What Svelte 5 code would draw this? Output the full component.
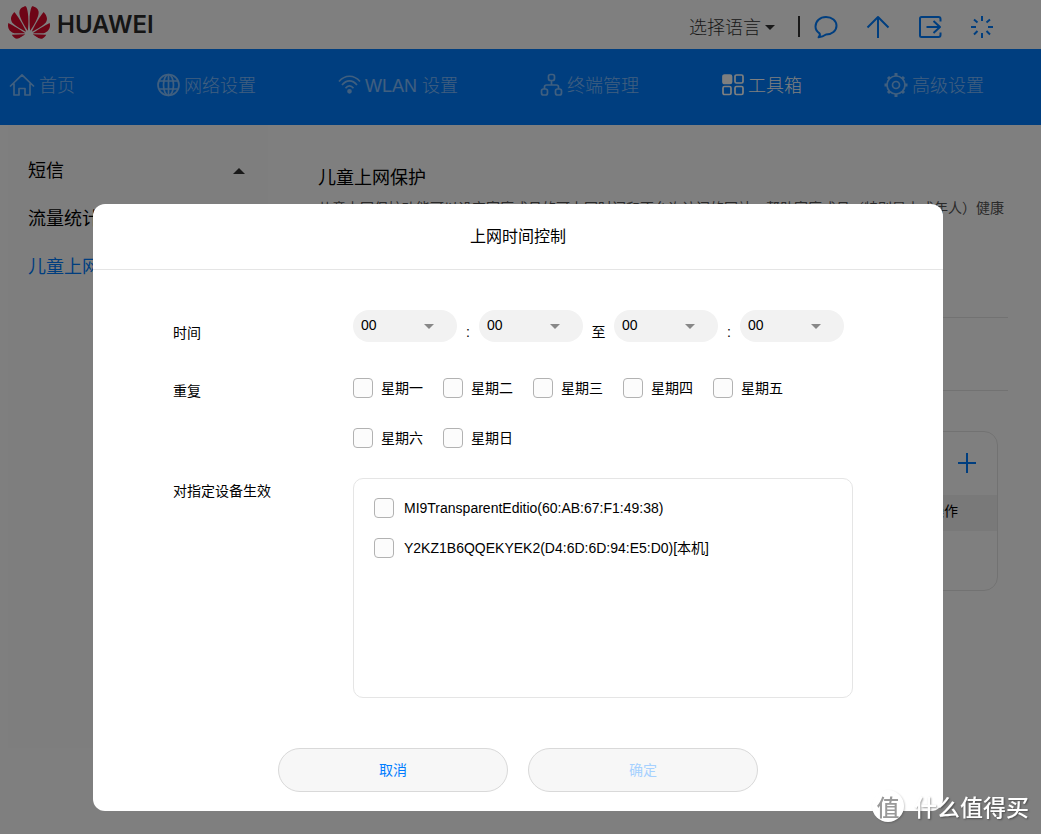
<script>
  const hours = Array.from({ length: 24 }, (_, i) => String(i).padStart(2, "0"));
  const minutes = Array.from({ length: 60 }, (_, i) => String(i).padStart(2, "0"));

  const nav = [
    { id: "home", name: "首页" },
    { id: "network", name: "网络设置" },
    { id: "wlan", name: "WLAN 设置" },
    { id: "devices", name: "终端管理" },
    { id: "tools", name: "工具箱" },
    { id: "advanced", name: "高级设置" },
  ];
  const activeNav = "tools";

  let startHour = $state("00");
  let startMinute = $state("00");
  let endHour = $state("00");
  let endMinute = $state("00");
  let modalOpen = $state(true);

  let days = $state(
    ["星期一", "星期二", "星期三", "星期四", "星期五", "星期六", "星期日"].map(
      (name) => ({ name, checked: false })
    )
  );
  let devices = $state([
    { name: "MI9TransparentEditio(60:AB:67:F1:49:38)", checked: false },
    { name: "Y2KZ1B6QQEKYEK2(D4:6D:6D:94:E5:D0)[本机]", checked: false },
  ]);

  let canSave = $derived(
    days.some((d) => d.checked) && devices.some((d) => d.checked)
  );

  function closeModal() {
    modalOpen = false;
  }
</script>

{#snippet timeSelect(label, options, value, update)}
  <span class="select">
    <select aria-label={label} {value} onchange={(e) => update(e.target.value)}>
      {#each options as option}
        <option value={option}>{option}</option>
      {/each}
    </select>
  </span>
{/snippet}

<div class="page">
  <header class="header">
    <a class="logo" href="#home">
      <svg width="42" height="33" viewBox="0 2.8 24 18.4" preserveAspectRatio="none" aria-hidden="true">
        <path fill="#dc0a2d" d="M3.67 6.14S1.82 7.91 1.72 9.78v.35c.08 1.51 1.22 2.4 1.22 2.4 1.83 1.79 6.26 4.04 7.3 4.55 0 0 .06.03.1-.01l.02-.04v-.04C7.52 10.8 3.67 6.14 3.67 6.14zM9.65 18.6c-.02-.08-.1-.08-.1-.08l-7.38.26c.8 1.43 2.15 2.53 3.56 2.2.96-.25 3.16-1.78 3.88-2.3.06-.05.04-.09.04-.09zm.08-.78C6.49 15.63.21 12.28.21 12.28c-.15.46-.2.9-.21 1.3v.07c0 1.07.4 1.82.4 1.82.8 1.69 2.34 2.2 2.34 2.2.7.3 1.4.31 1.4.31.12.02 4.4 0 5.54 0 .05 0 .08-.05.08-.05v-.06c0-.03-.03-.05-.03-.05zM9.06 3.19a3.42 3.42 0 00-2.57 3.15v.41c.03.6.16 1.05.16 1.05.66 2.9 3.86 7.65 4.55 8.65.05.05.1.03.1.03a.1.1 0 00.06-.1c1.06-10.6-1.11-13.42-1.11-13.42-.32.02-1.19.23-1.19.23zm8.299 2.27s-.49-1.8-2.44-2.28c0 0-.57-.14-1.17-.22 0 0-2.18 2.81-1.12 13.43.01.07.06.08.06.08.07.03.1-.03.1-.03.72-1.03 3.9-5.76 4.55-8.64 0 0 .36-1.4.02-2.34zm-2.92 13.07s-.07 0-.09.05c0 0-.01.07.03.1.7.51 2.85 2 3.88 2.3 0 0 .16.05.43.06h.14c.69-.02 1.9-.37 3-2.26l-7.4-.25zm7.83-8.41c.14-2.06-1.94-3.97-1.94-3.98 0 0-3.85 4.66-6.67 10.8 0 0-.03.08.02.13l.04.01h.06c1.06-.53 5.46-2.77 7.28-4.54 0 0 1.15-.93 1.21-2.42zm1.52 2.14s-6.28 3.37-9.52 5.55c0 0-.05.04-.03.11 0 0 .03.06.07.06 1.16 0 5.56 0 5.67-.02 0 0 .57-.02 1.27-.29 0 0 1.56-.5 2.37-2.27 0 0 .73-1.45.17-3.14z" />
      </svg>
      <span>HUAWEI</span>
    </a>
    <div class="actions">
      <button class="language">选择语言<i class="caret"></i></button>
      <i class="divider"></i>
      <button class="action" aria-label="消息">
        <svg width="24" height="24" viewBox="0 0 24 24">
          <path d="M5.5 18.3C3 16.700 1.500 14.600 1.500 11.500 1.500 6 6 2 12 2S22.500 6 22.500 10.800 18 19.500 12 19.500C9.500 21.200 6.800 22 4.600 22.300 5.800 21 6.200 19.500 5.500 18.300z" />
        </svg>
      </button>
      <button class="action" aria-label="更新">
        <svg width="24" height="24" viewBox="0 0 24 24">
          <path d="M12 23V2M1.500 12.500 12 2l10.500 10.500" />
        </svg>
      </button>
      <button class="action" aria-label="退出">
        <svg width="24" height="24" viewBox="0 0 24 24">
          <path d="M22.500 6.500V4q0-2-2-2H3.500Q2 2 2 3.500v17Q2 22 3.500 22h17q2 0 2-2v-2.500M8.500 12H22M15.500 6l6.500 6-6.500 6" />
        </svg>
      </button>
      <button class="action" aria-label="重启">
        <svg width="24" height="24" viewBox="0 0 24 24">
          <path d="M12 1v5M12 18v5M1 12h5M18 12h5M4 4.500l3.500 3M16.500 16l3.500 3.500M20 4.500l-3.500 3M7.500 16 4 19.500" />
        </svg>
      </button>
    </div>
  </header>

  <nav class="nav">
    {#each nav as item}
      <a class="nav__item" class:nav__item--active={item.id === activeNav} href="#{item.id}">
        {#if item.id === "home"}
          <svg width="27" height="24" viewBox="0 0 27 24">
            <path d="M1 13.500 13 1.800l12 11.700M5 10.500V22h5v-6.500h6V22h5V10.500" />
          </svg>
        {:else if item.id === "network"}
          <svg width="24" height="24" viewBox="0 0 24 24">
            <circle cx="11.500" cy="12" r="10.500" />
            <ellipse cx="11.500" cy="12" rx="5" ry="10.500" />
            <path d="M2 8h19M2 16h19M11.500 1.500v21" />
          </svg>
        {:else if item.id === "wlan"}
          <svg width="24" height="24" viewBox="0 0 24 24">
            <path d="M1 8.500C7 1.500 16 1.500 22 8.500M4 12C8.500 6.500 14.500 6.500 19 12M7.500 15.200C10 12 13 12 15.500 15.200" />
            <circle class="solid" cx="11.500" cy="18.300" r="1.500" />
          </svg>
        {:else if item.id === "devices"}
          <svg width="24" height="24" viewBox="0 0 24 24">
            <rect x="8.500" y="1.500" width="6" height="6" rx="2" />
            <rect x="1.500" y="16" width="6" height="6" rx="2" />
            <rect x="15.500" y="16" width="6" height="6" rx="2" />
            <path d="M11.500 7.500V12M4.500 16v-2q0-2 2-2h10q2 0 2 2v2" />
          </svg>
        {:else if item.id === "tools"}
          <svg width="24" height="24" viewBox="0 0 24 24">
            <rect class="solid" x="2" y="2" width="8.500" height="8.500" rx="1.500" />
            <rect x="14" y="2" width="8" height="8" rx="1.500" />
            <rect x="2" y="13.500" width="8" height="8" rx="1.500" />
            <rect x="14" y="13.500" width="8" height="8" rx="1.500" />
          </svg>
        {:else}
          <svg width="25" height="24" viewBox="0 0 24 24">
            <circle cx="11.500" cy="12" r="9" />
            <circle cx="11.500" cy="12" r="3.500" />
            <path class="teeth" d="M11.500 0v3M11.500 21v3M0 12h2.500M20.500 12H23M3.500 4l1.800 1.800M17.700 18.200l1.800 1.800M19.500 4l-1.800 1.800M5.300 18.200 3.500 20" />
          </svg>
        {/if}
        <span>{item.name}</span>
      </a>
    {/each}
  </nav>

  <div class="body">
    <aside class="sidebar">
      <a href="#sms">短信<i class="caret caret--up"></i></a>
      <a href="#traffic">流量统计</a>
      <a class="current" href="#parental">儿童上网保护</a>
    </aside>
    <main class="content">
      <h1>儿童上网保护</h1>
      <p class="content__intro">
        儿童上网保护功能可以设定家庭成员的可上网时间和不允许访问的网站，帮助家庭成员（特别是未成年人）健康上网。
      </p>
      <div class="content__row"></div>
      <div class="rules">
        <div class="rules__bar">
          <button class="rules__add" aria-label="添加">
            <svg width="20" height="20" viewBox="0 0 20 20"><path d="M10 0v20M1 10h18" /></svg>
          </button>
        </div>
        <div class="rules__head">操作</div>
      </div>
    </main>
  </div>
</div>

{#if modalOpen}
  <div class="overlay">
    <form class="modal" role="dialog" aria-labelledby="modal-title" onsubmit={(e) => e.preventDefault()}>
      <h2 class="modal__title" id="modal-title">上网时间控制</h2>
      <div class="modal__body">
        <div class="field field--time">
          <span class="field__label">时间</span>
          <div class="times">
            {@render timeSelect("开始小时", hours, startHour, (v) => (startHour = v))}
            <span class="times__colon">:</span>
            {@render timeSelect("开始分钟", minutes, startMinute, (v) => (startMinute = v))}
            <span class="times__to">至</span>
            {@render timeSelect("结束小时", hours, endHour, (v) => (endHour = v))}
            <span class="times__colon">:</span>
            {@render timeSelect("结束分钟", minutes, endMinute, (v) => (endMinute = v))}
          </div>
        </div>
        <div class="field">
          <span class="field__label">重复</span>
          <div class="days">
            {#each days as day}
              <label class="check">
                <input type="checkbox" bind:checked={day.checked} />
                <span>{day.name}</span>
              </label>
            {/each}
          </div>
        </div>
        <div class="field">
          <span class="field__label">对指定设备生效</span>
          <div class="devices">
            {#each devices as device}
              <label class="check check--device">
                <input type="checkbox" bind:checked={device.checked} />
                <span>{device.name}</span>
              </label>
            {/each}
          </div>
        </div>
      </div>
      <footer class="modal__footer">
        <button type="button" class="button" onclick={closeModal}>取消</button>
        <button type="submit" class="button" disabled={!canSave}>确定</button>
      </footer>
    </form>
  </div>
{/if}

<div class="watermark">
  <span class="watermark__badge">值</span>
  <span>什么值得买</span>
</div>

<style>
  :global(body) {
    color: #000;
    background: #fff;
    font-family: "Liberation Sans", "Noto Sans CJK SC", sans-serif;
    font-size: 14px;
    line-height: 20px;
  }
  * {
    box-sizing: border-box;
  }
  a {
    color: inherit;
    text-decoration: none;
  }
  button {
    padding: 0;
    border: none;
    background: none;
    font: inherit;
    color: inherit;
    cursor: pointer;
  }
  svg {
    display: block;
    flex: none;
    fill: none;
    stroke: currentColor;
    stroke-width: 2;
    stroke-linejoin: round;
  }
  .solid {
    fill: currentColor;
  }
  .teeth {
    stroke-width: 3;
  }

  .page {
    min-height: 100vh;
    overflow: hidden;
  }
  .header {
    height: 49px;
    padding: 0 47px 0 8px;
    display: flex;
    justify-content: space-between;
    align-items: center;
  }
  .logo {
    display: flex;
    align-items: center;
    gap: 7px;
    height: 45px;
    align-self: flex-start;
    font-family: Inter, sans-serif;
    font-weight: 600;
    font-size: 24px;
    line-height: 32px;
    color: #2b2b2b;
  }
  .logo svg {
    stroke: none;
  }
  .logo span {
    margin-top: 4px;
  }
  .actions {
    display: flex;
    align-items: center;
    gap: 28px;
    padding-top: 4px;
    color: #007dff;
  }
  .language {
    display: flex;
    align-items: center;
    gap: 4px;
    font-size: 18px;
    font-weight: 300;
    color: #333;
    margin-right: -5px;
    padding-top: 2px;
  }
  .caret {
    border: 5px solid transparent;
    border-top-color: #333;
    border-bottom: none;
  }
  .caret--up {
    border-width: 6px;
    border-top: none;
    border-bottom: 6px solid #333;
  }
  .divider {
    width: 2px;
    height: 21px;
    margin-right: -14px;
    background: #333;
  }

  .nav {
    height: 76px;
    padding: 0 57px 4px 9px;
    display: flex;
    justify-content: space-between;
    align-items: center;
    background: #007dff;
    color: #fff;
    font-size: 18px;
    font-weight: 300;
    white-space: nowrap;
  }
  .nav__item {
    display: flex;
    align-items: center;
    gap: 3px;
    opacity: 0.5;
  }
  .nav__item--active {
    opacity: 1;
  }
  .nav__item svg {
    stroke-width: 1.7;
  }
  .nav__item span {
    padding-top: 2px;
  }

  .body {
    display: flex;
    align-items: flex-start;
  }
  .sidebar {
    width: 260px;
    height: 623px;
    flex: none;
    margin-left: 8px;
    padding: 22px 23px 0 20px;
    background: #fcfcfc;
    font-size: 18px;
  }
  .sidebar a {
    display: flex;
    justify-content: space-between;
    align-items: center;
    height: 48px;
  }
  .sidebar .current {
    color: #007dff;
  }
  .content {
    flex: 1;
    min-width: 0;
    padding: 41px 33px 0 50px;
  }
  h1 {
    margin: 0 0 8px;
    font-size: 18px;
    font-weight: 400;
    line-height: 24px;
  }
  .content__intro {
    height: 120px;
    margin: 0;
    border-bottom: 1px solid #e5e5e5;
    line-height: 20px;
    color: #555;
  }
  .content__row {
    height: 73px;
    border-bottom: 1px solid #e5e5e5;
  }
  .rules {
    height: 160px;
    margin: 40px 10px 0 0;
    border: 1px solid #e5e5e5;
    border-radius: 14px;
  }
  .rules__bar {
    height: 63px;
    padding: 0 20px 2px;
    display: flex;
    justify-content: flex-end;
    align-items: center;
    color: #007dff;
  }
  .rules__head {
    height: 36px;
    padding: 0 39px;
    background: #f2f2f2;
    line-height: 32px;
    text-align: right;
  }

  .overlay {
    position: fixed;
    inset: 0;
    padding: 204px 5px 0 0;
    display: flex;
    justify-content: center;
    align-items: flex-start;
    background: rgba(0, 0, 0, 0.5);
  }
  .modal {
    width: 850px;
    border-radius: 12px;
    background: #fff;
  }
  .modal__title {
    margin: 0;
    border-bottom: 1px solid #e5e5e5;
    font-size: 16px;
    font-weight: 400;
    line-height: 65px;
    text-align: center;
  }
  .modal__body {
    padding: 40px 80px 50px;
  }
  .field {
    display: flex;
    align-items: flex-start;
  }
  .field--time {
    margin-bottom: 35px;
  }
  .field__label {
    width: 180px;
    flex: none;
    padding-top: 3px;
  }
  .field--time .field__label {
    padding-top: 13px;
  }
  .times {
    display: flex;
    align-items: flex-start;
  }
  .times__colon,
  .times__to {
    width: 22px;
    padding-top: 12px;
    text-align: center;
  }
  .times__to {
    width: 31px;
  }
  .select {
    position: relative;
    width: 104px;
    height: 32px;
  }
  .select::after {
    content: "";
    position: absolute;
    top: 14px;
    right: 23px;
    border: 5px solid transparent;
    border-top-color: #888;
    border-bottom: none;
    pointer-events: none;
  }
  select {
    appearance: none;
    display: block;
    width: 100%;
    height: 100%;
    padding: 0 8px 2px;
    border: none;
    border-radius: 16px;
    background: #f2f2f2;
    color: #000;
    font: inherit;
  }
  .days {
    display: grid;
    grid-template-columns: repeat(5, 90px);
    row-gap: 30px;
    margin-bottom: 30px;
  }
  .check {
    display: flex;
    align-items: center;
    gap: 8px;
    height: 20px;
    white-space: nowrap;
    cursor: pointer;
  }
  input {
    appearance: none;
    width: 20px;
    height: 20px;
    margin: 0;
    border: 1px solid #b2b2b2;
    border-radius: 4px;
    background: #fcfcfc;
  }
  input:checked {
    border-color: #007dff;
    background: #007dff;
  }
  .devices {
    width: 500px;
    height: 220px;
    flex: none;
    padding: 19px 20px;
    display: flex;
    flex-direction: column;
    gap: 20px;
    border: 1px solid #e5e5e5;
    border-radius: 10px;
  }
  .check--device {
    gap: 10px;
  }
  .modal__footer {
    display: flex;
    justify-content: center;
    gap: 20px;
    padding-bottom: 19px;
  }
  .button {
    width: 230px;
    height: 44px;
    border: 1px solid #d9d9d9;
    border-radius: 22px;
    background: #f7f7f7;
    color: #007dff;
  }
  .button:disabled {
    color: #a6d1ff;
    cursor: default;
  }

  .watermark {
    position: fixed;
    right: 12px;
    bottom: 12px;
    display: flex;
    align-items: center;
    gap: 10px;
    color: #fff;
    font-family: "Noto Sans CJK SC", sans-serif;
    font-size: 23px;
    font-weight: 500;
    line-height: 32px;
    text-shadow: 1px 1px 2px rgba(0, 0, 0, 0.4);
    pointer-events: none;
  }
  .watermark__badge {
    width: 32px;
    height: 32px;
    border-radius: 50%;
    background: #fff;
    color: #999;
    text-align: center;
    text-shadow: none;
    box-shadow: 1px 1px 2px rgba(0, 0, 0, 0.2);
  }
</style>
